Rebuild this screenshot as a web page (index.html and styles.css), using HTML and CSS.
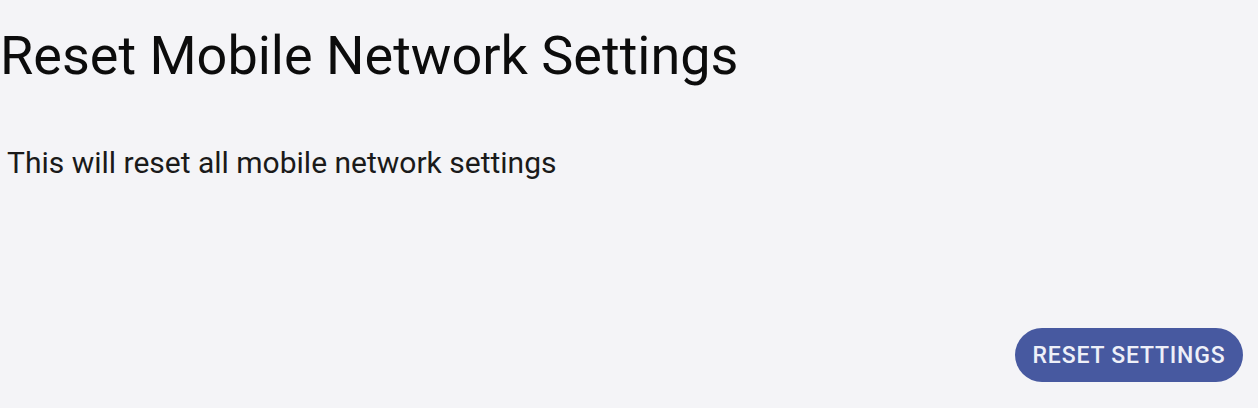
FILE: index.html
```html
<!doctype html>
<html lang="en">
<head>
    <meta charset="UTF-8">
    <title>Reset Mobile Network Settings</title>
    <link rel="stylesheet" href="styles.css">
</head>
<body>
    <div class="page">
        <h1 class="title">Reset Mobile Network Settings</h1>
        <p class="desc">This will reset all mobile network settings</p>
        <div class="actions">
            <button class="btn" type="button">RESET SETTINGS</button>
        </div>
    </div>
</body>
</html>
```

FILE: styles.css
```css
*{
    margin: 0;
    padding: 0;
    box-sizing: border-box;
}
html,body{
    width: 100%;
    height: 100%;
    overflow: hidden;
}
body{
    background: #f4f4f7;
    font-family: Roboto, "Liberation Sans", sans-serif;
    color: #111;
}
.page{
    display: flex;
    flex-direction: column;
    height: 100%;
    padding: 23px 15px 26px 0;
}
.title{
    font-size: 54px;
    font-weight: 400;
    line-height: 66px;
    color: #0c0c0c;
}
.desc{
    margin-top: 56px;
    padding-left: 7px;
    font-size: 30px;
    line-height: 36px;
    color: #1a1a1a;
}
.actions{
    display: flex;
    justify-content: flex-end;
    margin-top: auto;
}
.btn{
    width: 228px;
    height: 54px;
    border: none;
    border-radius: 27px;
    background: #4759a0;
    color: #eef0f8;
    font-family: Roboto, "Liberation Sans", sans-serif;
    font-size: 23px;
    font-weight: 500;
    letter-spacing: 0.8px;
}
```
